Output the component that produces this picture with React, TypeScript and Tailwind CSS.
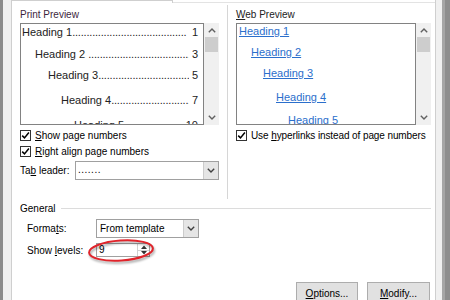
import React from "react";

const printRows = [
  { label: "Heading 1", page: "1", cls: "mt-[1px] pl-[1px]" },
  { label: "Heading 2 ", page: "3", cls: "mt-[8px] pl-[14px]" },
  { label: "Heading 3", page: "5", cls: "mt-[7px] pl-[27px]" },
  { label: "Heading 4", page: "7", cls: "mt-[11px] pl-[40px]" },
  { label: "Heading 5 ", page: "10", cls: "mt-[11px] pl-[53px]" },
];

const webRows = [
  { label: "Heading 1", cls: "mt-0 pl-[2px]" },
  { label: "Heading 2", cls: "mt-[7px] pl-[14px]" },
  { label: "Heading 3", cls: "mt-[7px] pl-[26px]" },
  { label: "Heading 4", cls: "mt-[10px] pl-[39px]" },
  { label: "Heading 5", cls: "mt-[9px] pl-[51px]" },
];

function Chevron({ up = false, color = "#606060" }: { up?: boolean; color?: string }) {
  return (
    <svg width="8" height="5" viewBox="0 0 8 5">
      <path
        d={up ? "M0.8 4.2 L4 1 L7.2 4.2" : "M0.8 0.8 L4 4 L7.2 0.8"}
        fill="none"
        stroke={color}
        strokeWidth="1.4"
      />
    </svg>
  );
}

function Check() {
  return (
    <span className="w-[11px] h-[11px] border border-[#333] bg-white flex items-center justify-center shrink-0">
      <svg width="9" height="9" viewBox="0 0 9 9">
        <path d="M1.2 4.6 L3.5 6.9 L7.9 1.6" fill="none" stroke="#000" strokeWidth="1.5" />
      </svg>
    </span>
  );
}

function ScrollBar() {
  return (
    <div className="w-[15px] h-full bg-[#f0f0f0] flex flex-col items-center shrink-0">
      <div className="h-[13px] flex items-center justify-center pt-[2px]">
        <Chevron up />
      </div>
      <div className="mt-[1px] w-[13px] h-[15px] bg-[#cdcdcd]" />
      <div className="flex-1" />
      <div className="h-[13px] flex items-center justify-center pb-[2px]">
        <Chevron />
      </div>
    </div>
  );
}

function DropButton() {
  return (
    <div className="w-[15px] h-full bg-[#e5e5e5] border-l border-[#cccccc] flex items-center justify-center shrink-0">
      <Chevron color="#404040" />
    </div>
  );
}

export default function App() {
  return (
    <div className="w-[450px] h-[300px] flex overflow-hidden bg-white text-black font-['Liberation_Sans',Arial,sans-serif] text-[10px]">
      {/* window edge on the left */}
      <div className="w-[3px] h-full bg-[#8b8b8b]" />
      <div className="w-[8px] h-full bg-[#f0f0f0]" />

      {/* tab panel */}
      <div className="w-[425px] h-full border-l border-r border-[#cfcfcf] bg-white flex flex-col">
        <div className="h-[3px] flex shrink-0">
          <div className="w-[161px] h-full border-t border-r border-[#cfcfcf]" />
          <div className="flex-1 h-full border-b border-[#e3e3e3]" />
        </div>

        <div className="pl-[8px] pr-[4px] flex flex-col">
          {/* previews */}
          <div className="h-[197px] flex">
            {/* Print Preview */}
            <div className="w-[200px] flex flex-col">
              <div className="mt-[6px] h-[12px] leading-[12px] text-[#3d1f3d]">Print Preview</div>
              <div className="mt-[2px] h-[102px] flex">
                <div className="w-[184px] h-full border border-[#828282] overflow-hidden flex flex-col text-[11px] text-[#222]">
                  {printRows.map((r) => (
                    <div key={r.label} className={`h-[14px] leading-[14px] flex pr-[5px] shrink-0 ${r.cls}`}>
                      <span className="whitespace-pre shrink-0">{r.label}</span>
                      <span className="flex-1 min-w-0 overflow-hidden whitespace-nowrap text-clip tracking-[-0.2px]">
                        {".".repeat(40)}
                      </span>
                      <span className="shrink-0 pl-[3px]">{r.page}</span>
                    </div>
                  ))}
                </div>
                <ScrollBar />
              </div>
              <div className="mt-[3px] h-[14px] flex items-center gap-[4px]">
                <Check />
                <span>
                  <span className="underline">S</span>how page numbers
                </span>
              </div>
              <div className="mt-[2px] h-[14px] flex items-center gap-[4px]">
                <Check />
                <span>
                  <span className="underline">R</span>ight align page numbers
                </span>
              </div>
              <div className="mt-[3px] h-[19px] flex items-center">
                <span className="w-[55px]">
                  Ta<span className="underline">b</span> leader:
                </span>
                <div className="w-[144px] h-full border border-[#a0a0a0] flex bg-white">
                  <span className="flex-1 pl-[2px] leading-[15px] tracking-[0.5px]">.......</span>
                  <DropButton />
                </div>
              </div>
            </div>

            {/* divider */}
            <div className="ml-[7px] mt-[2px] w-px h-[194px] bg-[#d6d6d6]" />

            {/* Web Preview */}
            <div className="ml-[8px] w-[195px] flex flex-col">
              <div className="mt-[6px] h-[12px] leading-[12px] text-[#222]">
                <span className="underline">W</span>eb Preview
              </div>
              <div className="mt-[2px] h-[102px] flex">
                <div className="w-[181px] h-full border border-[#828282] overflow-hidden flex flex-col text-[11px] text-[#2b6fcc]">
                  {webRows.map((r) => (
                    <div key={r.label} className={`h-[14px] leading-[14px] shrink-0 ${r.cls}`}>
                      <span className="underline">{r.label}</span>
                    </div>
                  ))}
                </div>
                <ScrollBar />
              </div>
              <div className="mt-[3px] h-[14px] flex items-center gap-[4px]">
                <Check />
                <span className="tracking-[-0.1px]">
                  Use <span className="underline">h</span>yperlinks instead of page numbers
                </span>
              </div>
            </div>
          </div>

          {/* General */}
          <div className="mt-[1px] h-[14px] flex items-center">
            <span>General</span>
            <div className="ml-[5px] flex-1 h-px bg-[#dcdcdc]" />
          </div>
          <div className="mt-[4px] h-[19px] pl-[7px] flex items-center">
            <span className="w-[69px]">
              Forma<span className="underline">t</span>s:
            </span>
            <div className="w-[103px] h-full border border-[#a0a0a0] flex bg-white">
              <span className="flex-1 pl-[3px] leading-[17px]">From template</span>
              <DropButton />
            </div>
          </div>
          <div className="relative mt-[5px] h-[14px] pl-[7px] flex items-center">
            <span className="w-[69px]">
              Show <span className="underline">l</span>evels:
            </span>
            <div className="w-[54px] h-full border border-[#a0a0a0] flex bg-white">
              <span className="flex-1 pl-[2px] leading-[12px]">9</span>
              <div className="w-[12px] h-full border-l border-[#d0d0d0] flex flex-col">
                <div className="flex-1 flex items-center justify-center">
                  <svg width="6" height="4" viewBox="0 0 6 4">
                    <path d="M0 4 L3 0.5 L6 4 Z" fill="#333" />
                  </svg>
                </div>
                <div className="flex-1 flex items-center justify-center border-t border-[#d0d0d0]">
                  <svg width="6" height="4" viewBox="0 0 6 4">
                    <path d="M0 0 L3 3.5 L6 0 Z" fill="#333" />
                  </svg>
                </div>
              </div>
            </div>
            {/* red annotation ring */}
            <svg
              className="absolute left-[65px] top-[-6px] drop-shadow-[1px_2px_1px_rgba(0,0,0,0.35)]"
              width="72"
              height="28"
              viewBox="0 0 72 28"
            >
              <ellipse
                cx="36"
                cy="13.5"
                rx="32"
                ry="10"
                transform="rotate(-4 36 13.5)"
                fill="none"
                stroke="#e0242b"
                strokeWidth="2"
              />
            </svg>
          </div>

          {/* buttons */}
          <div className="mt-[25px] flex justify-end gap-[9px] pr-[1px]">
            <div className="w-[62px] h-[22px] bg-[#e1e1e1] border border-[#adadad] flex items-center justify-center">
              <span>
                <span className="underline">O</span>ptions...
              </span>
            </div>
            <div className="w-[63px] h-[22px] bg-[#e1e1e1] border border-[#adadad] flex items-center justify-center">
              <span>
                <span className="underline">M</span>odify...
              </span>
            </div>
          </div>
        </div>
      </div>

      {/* window edge on the right */}
      <div className="w-[6px] h-full bg-[#f0f0f0]" />
      <div className="w-[3px] h-full bg-[#a6a6a6]" />
      <div className="w-[5px] h-full bg-[#8e8e8e]" />
    </div>
  );
}
